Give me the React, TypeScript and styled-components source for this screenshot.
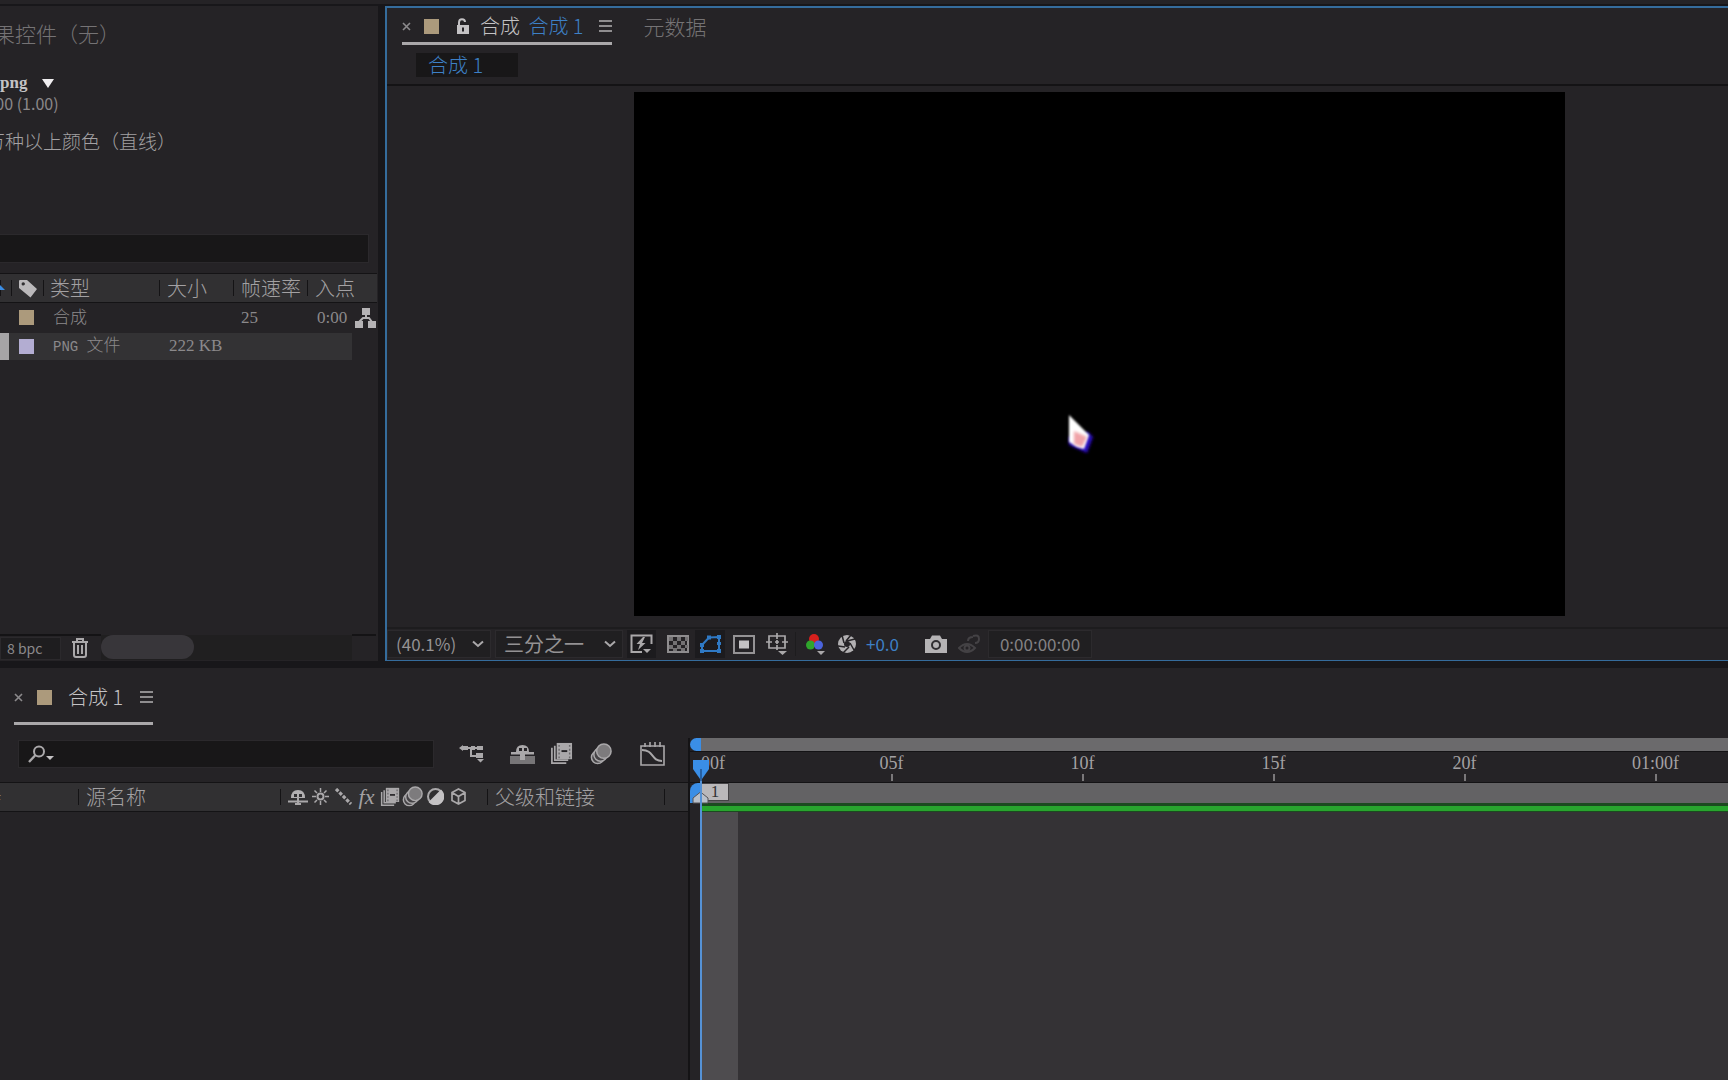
import React from "react";
import styled, { createGlobalStyle, css } from "styled-components";

const c = {
  panel: "#252326",
  gutter: "#18171a",
  bar: "#313032",
  field: "#181718",
  line: "#141315",
  text: "#a3a1a3",
  dim: "#757375",
  bright: "#c4c2c4",
  blue: "#3d80c6",
  marker: "#3a8ee6",
};

const Global = createGlobalStyle`
  * { box-sizing: border-box; }
  body { margin: 0; background: ${c.gutter}; }
  button, input, select { font: inherit; color: inherit; margin: 0; padding: 0; border: 0; background: none; border-radius: 0; }
  svg { display: block; flex: none; }
`;

const Shell = styled.div`
  display: flex;
  flex-direction: column;
  min-height: 100vh;
  overflow: hidden;
  color: ${c.text};
  font: 300 20px/24px "Noto Sans CJK SC", "Noto Sans", sans-serif;
`;
const TopStrip = styled.div`
  height: 4px;
  margin-bottom: 2px;
  background: ${c.panel};
`;
const Upper = styled.div`
  display: flex;
  gap: 7px;
  margin-bottom: 7px;
`;

/* ---------- project panel ---------- */
const Project = styled.section`
  display: flex;
  flex-direction: column;
  flex: none;
  width: 378px;
  overflow: hidden;
  background: ${c.panel};
`;
const EffectsTab = styled.button`
  align-self: flex-start;
  margin: 15px 0 0 -27px;
  font-size: 21px;
  line-height: 24px;
  color: ${c.dim};
  white-space: nowrap;
`;
const FileInfo = styled.div`
  margin-top: 28px;
  white-space: nowrap;
`;
const FileName = styled.button`
  display: flex;
  align-items: center;
  gap: 15px;
  font: bold 17px/20px "Liberation Serif", serif;
  color: ${c.bright};
`;
const PixelAspect = styled.p`
  margin: 0 0 0 -18px;
  font-size: 16px;
  font-weight: 400;
  line-height: 20px;
  color: #8b888a;
`;
const ColorDepth = styled.p`
  margin: 18px 0 0 -52px;
  font-size: 19px;
  line-height: 20px;
`;
const ProjectSearch = styled.input`
  width: 369px;
  height: 29px;
  margin-top: 83px;
  background: ${c.field};
  border: 1px solid #2b292c;
  border-left: 0;
`;
const Items = styled.table`
  width: 377px;
  margin-top: 10px;
  table-layout: fixed;
  border-collapse: collapse;
  text-align: left;
`;
const Th = styled.th<{ $pad?: number }>`
  height: 29px;
  padding: 0 0 0 ${(p) => p.$pad ?? 0}px;
  border: solid ${c.line};
  border-width: 1px 0;
  background: linear-gradient(${c.line}, ${c.line}) 0 center / 1px 16px no-repeat ${c.bar};
  font-weight: 300;
  line-height: 24px;
  white-space: nowrap;
`;
const Row = styled.tr<{ $selected?: boolean }>`
  height: ${(p) => (p.$selected ? 27 : 30)}px;
  font-size: 17px;
  line-height: 20px;
  color: #8b898b;
  td:not(:last-child) { background: ${(p) => (p.$selected ? "#333234" : "transparent")}; }
`;
const Td = styled.td<{ $pad?: number }>`
  padding: 0 0 0 ${(p) => p.$pad ?? 0}px;
  font-family: "Liberation Serif", "Noto Sans CJK SC", serif;
  white-space: nowrap;
`;
const Latin = styled.span`
  margin-right: 4px;
  font: 14px/20px "Liberation Mono", monospace;
`;
const Thumb = styled.div`
  width: 9px;
  height: 27px;
  background: #a6a4a6;
`;
const Swatch = styled.span<{ $color?: string }>`
  display: block;
  flex: none;
  width: 15px;
  height: 15px;
  background: ${(p) => p.$color ?? "#ac9a7c"};
`;
const ProjectFooter = styled.div`
  display: flex;
  align-items: center;
  height: 27px;
  margin-top: auto;
  padding-right: 2px;
`;
const FooterGroup = styled.div<{ $width: number }>`
  display: flex;
  align-items: center;
  width: ${(p) => p.$width}px;
  height: 27px;
  border-top: 2px solid ${c.line};
`;
const Depth = styled.button`
  width: 61px;
  height: 23px;
  margin-right: 10px;
  padding-left: 6px;
  background: #1e1d1f;
  border: 1px solid #2b292c;
  font-size: 14px;
  font-weight: 400;
  line-height: 20px;
  text-align: left;
  color: #8b898b;
`;
const ScrollTrack = styled.div`
  flex: 1;
  height: 25px;
  background: #201f20;
`;
const ScrollThumb = styled.div`
  width: 93px;
  height: 24px;
  border-radius: 12px;
  background: #38363a;
`;

/* ---------- composition panel ---------- */
const Composition = styled.section`
  flex: 1;
  min-width: 0;
  background: ${c.panel};
  border: solid #356c9c;
  border-width: 2px 0 1px 2px;
`;
const TabBar = styled.div`
  display: flex;
  gap: 32px;
  padding-left: 15px;
`;
const Tab = styled.div<{ $tall?: boolean }>`
  display: flex;
  align-items: center;
  height: ${(p) => (p.$tall ? 57 : 37)}px;
  padding-top: ${(p) => (p.$tall ? 5 : 2)}px;
  border-bottom: 3px solid #aaa8aa;
`;
const TabTitle = styled.button<{ $blue?: boolean }>`
  margin-left: ${(p) => (p.$blue ? 4 : 0)}px;
  font-size: 20px;
  line-height: 24px;
  white-space: pre;
  color: ${(p) => (p.$blue ? c.blue : c.bright)};
`;
const PlainTab = styled.button`
  height: 34px;
  padding-top: 2px;
  font-size: 21px;
  line-height: 24px;
  color: ${c.dim};
`;
const IconButton = styled.button<{ $width: number; $before?: number; $gap?: number; $dark?: boolean }>`
  display: flex;
  align-items: center;
  justify-content: center;
  flex: none;
  width: ${(p) => p.$width}px;
  height: 28px;
  margin-left: ${(p) => p.$before ?? 0}px;
  margin-right: ${(p) => p.$gap ?? 0}px;
  background: ${(p) => (p.$dark ? "#1c1b1e" : "transparent")};
`;
const SubTabBar = styled.div`
  height: 41px;
  padding: 8px 0 0 29px;
  border-bottom: 2px solid ${c.line};
`;
const SubTab = styled.button`
  width: 102px;
  height: 24px;
  padding-left: 12px;
  background: ${c.field};
  line-height: 22px;
  text-align: left;
  color: ${c.blue};
`;
const Stage = styled.div`
  padding: 6px 163px 11px 247px;
`;
const Canvas = styled.div`
  position: relative;
  aspect-ratio: 16 / 9;
  background: #000;
`;
const Pointer = styled.svg`
  position: absolute;
  left: 46%;
  top: 61%;
`;
const ViewBar = styled.div`
  display: flex;
  align-items: center;
  height: 33px;
  border-top: 2px solid #1d1c1e;
`;
const boxed = css`
  height: 28px;
  background: #201f21;
  border: 1px solid #2c2a2d;
`;
const SelectBox = styled.label<{ $width: number }>`
  ${boxed}
  display: grid;
  align-items: center;
  flex: none;
  width: ${(p) => p.$width}px;
  margin-right: 4px;
  > * { grid-area: 1 / 1; }
  svg { justify-self: end; margin-right: 5px; pointer-events: none; }
`;
const Select = styled.select<{ $size: number }>`
  width: 100%;
  padding-left: 8px;
  appearance: none;
  outline: 0;
  font-size: ${(p) => p.$size}px;
  font-weight: 400;
  line-height: 24px;
  color: #949294;
`;
const Exposure = styled.button`
  width: 58px;
  font-size: 17px;
  font-weight: 400;
  line-height: 24px;
  text-align: left;
  color: ${c.blue};
`;
const Rule = styled.span<{ $gap: number }>`
  width: 1px;
  height: 24px;
  margin-right: ${(p) => p.$gap}px;
  background: #1d1c1e;
`;
const Time = styled.button`
  ${boxed}
  width: 104px;
  font-size: 17px;
  font-weight: 400;
  line-height: 24px;
  color: #858385;
`;

/* ---------- timeline panel ---------- */
const Timeline = styled.section`
  display: flex;
  flex-direction: column;
  flex: 1;
  background: ${c.panel};
`;
const TimelineTabs = styled.div`
  display: flex;
  height: 70px;
  padding-left: 14px;
`;
const Split = styled.div`
  display: flex;
  flex: 1;
`;
const Layers = styled.div`
  flex: none;
  width: 690px;
  border-right: 2px solid ${c.line};
`;
const Tools = styled.div`
  display: flex;
  align-items: center;
  height: 44px;
  padding: 0 0 12px 18px;
`;
const Search = styled.label`
  display: flex;
  align-items: center;
  width: 416px;
  height: 28px;
  margin-right: 25px;
  padding-left: 9px;
  background: ${c.field};
  border: 1px solid #2b292c;
`;
const SearchInput = styled.input`
  flex: 1;
  min-width: 0;
  height: 24px;
  outline: 0;
`;
const LayerHead = styled.div`
  display: flex;
  height: 30px;
  background: ${c.bar};
  border: solid ${c.line};
  border-width: 1px 0;
`;
const HeadCell = styled.div<{ $width: number; $pad?: number }>`
  display: flex;
  align-items: center;
  width: ${(p) => p.$width}px;
  padding-left: ${(p) => p.$pad ?? 0}px;
  overflow: hidden;
  white-space: nowrap;
  background: linear-gradient(${c.line}, ${c.line}) right center / 1px 16px no-repeat;
`;
const Hash = styled.span`
  margin-left: -8px;
  font-size: 17px;
`;
const Switch = styled.span`
  display: flex;
  justify-content: center;
  flex: none;
  width: 23px;
`;
const Tracks = styled.div`
  position: relative;
  display: flex;
  flex-direction: column;
  flex: 1;
  min-width: 0;
  overflow: hidden;
`;
const Navigator = styled.div`
  height: 13px;
  border-left: 11px solid ${c.marker};
  border-radius: 7px 0 0 7px;
  background: #6b6a6c;
`;
const Ruler = styled.div`
  display: flex;
  height: 32px;
  padding-left: 11px;
  border-top: 1px solid ${c.line};
  border-bottom: 1px solid ${c.line};
  font: 18px/22px "Liberation Serif", serif;
`;
const Mark = styled.div<{ $first?: boolean }>`
  flex: none;
  display: flex;
  flex-direction: column;
  align-items: ${(p) => (p.$first ? "flex-start" : "center")};
  width: ${(p) => (p.$first ? 95 : 191)}px;
  &::after {
    content: "";
    display: ${(p) => (p.$first ? "none" : "block")};
    width: 2px;
    height: 7px;
    background: #7a787a;
  }
`;
const WorkArea = styled.div`
  height: 20px;
  border-left: 11px solid ${c.marker};
  border-radius: 8px 0 0 0;
  background: #636264;
`;
const CompMarker = styled.button`
  display: block;
  width: 28px;
  height: 18px;
  background: #bab8ba;
  border: 1px solid #454346;
  font: 17px/16px "Liberation Serif", serif;
  color: #333;
`;
const CacheBar = styled.div`
  height: 9px;
  margin-left: 11px;
  border: solid #1c4a20;
  border-width: 3px 0 1px;
  background: #28a52e;
`;
const TrackBody = styled.div`
  flex: 1;
  margin-left: 11px;
  background: #343235;
`;
const FirstFrame = styled.div`
  width: 37px;
  height: 100%;
  background: #4e4c4f;
`;
const Playhead = styled.div`
  position: absolute;
  top: 21px;
  bottom: 0;
  left: 2px;
  width: 18px;
  background: linear-gradient(#5592d6, #5592d6) 8px 20px / 2px 100% no-repeat;
`;
const WorkHandle = styled.svg`
  position: absolute;
  left: 2px;
  top: 53px;
`;

/* ---------- icons ---------- */
const G = "#aaa8aa";
type IconProps = { w: number; h: number; box: string; children: React.ReactNode };
const Icon = ({ w, h, box, children }: IconProps) => (
  <svg width={w} height={h} viewBox={box} fill="none" stroke={G} strokeWidth="2" aria-hidden="true">{children}</svg>
);
const Close = () => (
  <Icon w={9} h={9} box="0 0 9 9"><path d="M1 1l7 7M8 1L1 8" stroke="#8c8a8c" strokeWidth="1.6" /></Icon>
);
const Menu = () => (
  <Icon w={13} h={12} box="0 0 13 12"><path d="M0 1h13M0 6h13M0 11h13" stroke="#8f8d8f" strokeWidth="1.8" /></Icon>
);
const Chevron = () => (
  <Icon w={14} h={8} box="0 0 14 8"><path d="M2 1.500L7 6l5-4.500" /></Icon>
);
const Unlock = () => (
  <Icon w={14} h={17} box="0 0 14 17">
    <path d="M3 8V4.500C3 2 4.500 1.200 6 1.200S9 2 9 4" stroke={c.bright} />
    <path d="M1 7h12v9H1z" fill={c.bright} stroke="none" /><path d="M7 9.500v4" stroke="#252326" />
  </Icon>
);
const Tag = () => (
  <Icon w={20} h={19} box="0 0 20 19">
    <path fillRule="evenodd" d="M1 2q0-1 1-1h7l10 9-6.500 8.500L1 9zM5.200 3.200a1.700 1.700 0 1 0 .1 3.400 1.700 1.700 0 0 0-.1-3.400z" fill="#bbb9bb" stroke="none" />
  </Icon>
);
const Flow = () => (
  <Icon w={21} h={20} box="0 0 21 20">
    <path d="M7 0h8v7H7zM0 13h8v7H0zM13 13h8v7h-8z" fill="#b5b3b5" stroke="none" /><path d="M11 6v4M4 14l4-4h6l3 4" stroke="#b5b3b5" />
  </Icon>
);
const Trash = () => (
  <Icon w={18} h={20} box="0 0 18 20">
    <path d="M1 4h16M6 3V1h6v2" /><path d="M3 5v12q0 2 2 2h8q2 0 2-2V5M7 7v9M11 7v9" />
  </Icon>
);
const FastPreview = () => (
  <Icon w={23} h={21} box="0 0 23 21">
    <path d="M12 18H1.500V1.500h20V10" /><path d="M13 3L6.500 10H10l-2 6 7.500-7H12l3-6z" fill={G} stroke="none" /><path d="M13 15h8l-4 4z" fill={G} stroke="none" />
  </Icon>
);
const Checker = () => (
  <Icon w={22} h={18} box="0 0 22 18">
    <path d="M1 1h20v16H1z" stroke="#8f8d8f" />
    <path d="M2 2h4v4H2zM10 2h4v4h-4zM6 6h4v4H6zM14 6h4v4h-4zM2 10h4v4H2zM10 10h4v4h-4zM6 13h4v3H6zM14 13h4v3h-4zM18 2h3v4h-3zM18 10h3v3h-3z" fill="#747274" stroke="none" />
  </Icon>
);
const MaskShape = () => (
  <Icon w={23} h={21} box="0 0 23 21">
    <path d="M3 17L3 11 10 3.500 20 3V17z" stroke="#2f79c4" />
    <path d="M1 15h4v4H1zM1 9h4v4H1zM8 1.500h4v4H8zM18 1h4v4h-4zM18 15h4v4h-4zM18 8h4v3h-4z" fill="#2f79c4" stroke="none" />
  </Icon>
);
const Region = () => (
  <Icon w={22} h={19} box="0 0 22 19"><path d="M1 1h20v17H1z" stroke="#959395" /><path d="M6 5.500h10v8H6z" fill={c.bright} stroke="none" /></Icon>
);
const Guides = () => (
  <Icon w={22} h={23} box="0 0 22 23">
    <path d="M3 3h16v12H3zM11 0v6M11 12v5M0 9h6M16 9h6M9 9h4M11 7v4" strokeWidth="1.700" /><path d="M12 18h9l-4.500 4z" fill={G} stroke="none" />
  </Icon>
);
const Channels = () => (
  <Icon w={20} h={23} box="0 0 20 23">
    <g stroke="none"><circle cx="8" cy="6" r="5" fill="#d6201d" /><circle cx="4.500" cy="12" r="4.500" fill="#2fa52c" /><circle cx="12.500" cy="12" r="4.500" fill="#4b63dc" /><path d="M11 18h8l-4 4z" fill={G} /></g>
  </Icon>
);
const Aperture = () => (
  <Icon w={20} h={20} box="0 0 20 20">
    <circle cx="10" cy="10" r="9" fill="#b2b0b2" stroke="none" />
    <circle cx="10" cy="10" r="3" fill={c.panel} stroke="none" />
    <path d="M10 7L18 5M13 9l4 7M12 13l-6 6M8 13L1 12M7 9L5 1M9 7l5-6" stroke={c.panel} strokeWidth="1.500" />
  </Icon>
);
const Camera = () => (
  <Icon w={22} h={18} box="0 0 22 18">
    <path d="M0 4h5l2-3.500h8L17 4h5v14H0z" fill="#b5b3b5" stroke="none" /><circle cx="11" cy="10" r="4" stroke="#302e31" />
  </Icon>
);
const ShowSnapshot = () => (
  <Icon w={23} h={20} box="0 0 23 20">
    <path d="M1 14q8-8 16 0-8 8-16 0zM10 7q0-4 5-4M15 2q6-2 6 3 0 4-4 4" stroke="#444245" /><circle cx="9" cy="14" r="2.500" stroke="#444245" />
  </Icon>
);
const Lens = () => (
  <Icon w={27} h={18} box="0 0 27 18"><circle cx="11" cy="6.500" r="5" /><path d="M7.500 10L1 17" strokeWidth="2.400" /><path d="M18 11h8l-4 4z" fill={c.bright} stroke="none" /></Icon>
);
const FlowChart = () => (
  <Icon w={26} h={19} box="0 0 26 19">
    <path d="M5 4h13M12 4v8h6" /><path d="M0 4l4-3v6zM4 2h5v4H4zM12 2h4v4h-4zM18 2h6v4h-6zM17 9h7v5h-7zM18 15h7l-3.500 3.500z" fill={G} stroke="none" />
  </Icon>
);
const ShyHead = () => (
  <Icon w={20} h={16} box="0 0 20 16">
    <path d="M3 9q0-8 7-8t7 8z" fill="#b2b0b2" stroke="none" />
    <path d="M6 5h3v3H6zM11 5h3v3h-3z" fill={c.bar} stroke="none" /><path d="M0 12.500h20M7 15h6M10 8v6" />
  </Icon>
);
const ShyAll = () => (
  <Icon w={25} h={20} box="0 0 25 20">
    <path d="M0 12h25v8H0z" fill="#777577" stroke="none" /><path d="M6 8q0-7 6.500-7T19 8zM1 8h23v2.500H1zM10 10h5v6h-5z" fill={G} stroke="none" />
    <path d="M9 4h3v3H9zM14 4h3v3h-3z" fill={c.panel} stroke="none" />
  </Icon>
);
const Frames = ({ size = 23 }: { size?: number }) => (
  <Icon w={size} h={size} box="0 0 24 24">
    <path d="M2 6v16h15M5 4v15h14" strokeWidth="1.800" /><path d="M7 1h16v17H7z" fill={G} stroke="none" />
    <path d="M9.500 3v14M20.500 3v14" stroke="#6a686b" strokeWidth="1.500" strokeDasharray="2 2" /><path d="M12 9.500h6" stroke={c.panel} />
  </Icon>
);
const Blur = ({ size = 22 }: { size?: number }) => (
  <Icon w={size} h={size} box="0 0 23 23">
    <circle cx="8" cy="15" r="6.500" strokeWidth="1.600" fill="#454346" /><circle cx="11" cy="12" r="7" strokeWidth="1.600" fill="#454346" /><circle cx="14.500" cy="8.500" r="7.500" fill="#7d7b7d" strokeWidth="1.600" />
  </Icon>
);
const Graph = () => (
  <Icon w={25} h={24} box="0 0 25 24"><path d="M1 4h23v19H1zM5 1v4M10 0v5M15 0v5M20 0v5" strokeWidth="1.600" /><path d="M2 8c12 0 9 11 20 11" /></Icon>
);
const Sun = () => (
  <Icon w={17} h={17} box="0 0 17 17"><circle cx="8.500" cy="8.500" r="3" /><path d="M8.500 0v4M8.500 13v4M0 8.500h4M13 8.500h4M2.500 2.500L5 5M12 12l2.500 2.500M14.500 2.500L12 5M5 12l-2.500 2.500" strokeWidth="1.500" /></Icon>
);
const Quality = () => (
  <Icon w={17} h={17} box="0 0 17 17"><path d="M1 1l15 15" strokeWidth="3.200" strokeDasharray="3.400 1.500" /></Icon>
);
const Fx = styled.span`
  font: italic 22px/24px "Liberation Serif", serif;
`;
const Adjustment = () => (
  <Icon w={17} h={17} box="0 0 17 17"><circle cx="8.500" cy="8.500" r="7.500" /><path d="M14 3A7.700 7.700 0 0 1 3 14z" fill={c.bright} stroke={c.bright} /></Icon>
);
const Cube = () => (
  <Icon w={17} h={17} box="0 0 17 17"><path d="M8.500 1l6.500 3.500v8L8.500 16 2 12.500v-8zM2 4.500l6.500 4 6.500-4M8.500 8.500V16" strokeWidth="1.700" /></Icon>
);

export default function App() {
  const switches = [
    <ShyHead />, <Sun />, <Quality />, <Fx>fx</Fx>, <Frames size={20} />, <Blur size={21} />, <Adjustment />, <Cube />,
  ];
  return (
    <Shell>
      <Global />
      <TopStrip />
      <Upper>
        <Project>
          <EffectsTab>效果控件（无）</EffectsTab>
          <FileInfo>
            <FileName>
              png
              <svg width="12" height="9" viewBox="0 0 12 9"><path d="M0 0h12L6 9z" fill="#f0eef0" /></svg>
            </FileName>
            <PixelAspect>1.00 (1.00)</PixelAspect>
            <ColorDepth>数百万种以上颜色（直线）</ColorDepth>
          </FileInfo>
          <ProjectSearch aria-label="搜索项目" />
          <Items>
            <colgroup>
              <col width="11" /><col width="32" /><col width="116" /><col width="74" />
              <col width="74" /><col width="45" /><col width="25" />
            </colgroup>
            <thead>
              <tr>
                <Th aria-label="排序"><svg width="6" height="6" viewBox="0 0 6 6"><path d="M0 0l5 5H0z" fill={c.marker} /></svg></Th>
                <Th $pad={7} aria-label="标签"><Tag /></Th>
                <Th $pad={7}>类型</Th>
                <Th $pad={8}>大小</Th>
                <Th $pad={8}>帧速率</Th>
                <Th $pad={8} colSpan={2}>入点</Th>
              </tr>
            </thead>
            <tbody>
              <Row>
                <Td /><Td $pad={8}><Swatch /></Td><Td $pad={10}>合成</Td><Td /><Td $pad={8}>25</Td><Td $pad={10}>0:00</Td><Td $pad={3}><Flow /></Td>
              </Row>
              <Row $selected>
                <Td><Thumb /></Td><Td $pad={8}><Swatch $color="#b3add2" /></Td><Td $pad={10}><Latin>PNG</Latin> 文件</Td><Td $pad={10}>222 KB</Td><Td /><Td /><Td />
              </Row>
            </tbody>
          </Items>
          <ProjectFooter>
            <FooterGroup $width={101}>
              <Depth>8 bpc</Depth>
              <IconButton $width={18} aria-label="删除"><Trash /></IconButton>
            </FooterGroup>
            <ScrollTrack><ScrollThumb /></ScrollTrack>
            <FooterGroup $width={24} />
          </ProjectFooter>
        </Project>

        <Composition>
          <TabBar>
            <Tab>
              <IconButton $width={9} $gap={13} aria-label="关闭"><Close /></IconButton>
              <Swatch />
              <IconButton $before={17} $width={14} $gap={10} aria-label="锁定"><Unlock /></IconButton>
              <TabTitle>合成 </TabTitle>
              <TabTitle $blue>合成 1</TabTitle>
              <IconButton $before={15} $width={13} aria-label="面板菜单"><Menu /></IconButton>
            </Tab>
            <PlainTab>元数据</PlainTab>
          </TabBar>
          <SubTabBar><SubTab>合成 1</SubTab></SubTabBar>
          <Stage>
            <Canvas>
              <Pointer width="38" height="48" viewBox="0 0 38 48" aria-hidden="true">
                <defs>
                  <filter id="soft" x="-30%" y="-30%" width="160%" height="160%"><feGaussianBlur stdDeviation="1.400" /></filter>
                  <filter id="edge" x="-30%" y="-30%" width="160%" height="160%"><feGaussianBlur stdDeviation="0.800" /></filter>
                </defs>
                <path d="M7 26l19-5 5 5-6 16-18-8z" fill="#2c0fc0" filter="url(#soft)" />
                <path d="M7 4l20 20-5 14-7-2-8-5z" fill="#fff" filter="url(#edge)" />
                <path d="M12 20l13 6-5 10-8-3z" fill="#f0a3a8" filter="url(#soft)" />
              </Pointer>
            </Canvas>
          </Stage>
          <ViewBar>
            <SelectBox $width={104}>
              <Select $size={17} aria-label="放大率"><option>(40.1%)</option></Select><Chevron />
            </SelectBox>
            <SelectBox $width={128}>
              <Select $size={20} aria-label="分辨率"><option>三分之一</option></Select><Chevron />
            </SelectBox>
            <IconButton $width={29} $gap={5} $dark aria-label="快速预览"><FastPreview /></IconButton>
            <IconButton $width={33} $gap={1} aria-label="透明网格"><Checker /></IconButton>
            <IconButton $width={30} $gap={4} $dark aria-label="蒙版"><MaskShape /></IconButton>
            <IconButton $width={30} $gap={3} aria-label="目标区域"><Region /></IconButton>
            <IconButton $width={30} $gap={3} aria-label="参考线"><Guides /></IconButton>
            <Rule $gap={6} />
            <IconButton $width={27} $gap={5} aria-label="通道"><Channels /></IconButton>
            <IconButton $width={26} $gap={6} aria-label="重置曝光"><Aperture /></IconButton>
            <Exposure>+0.0</Exposure>
            <IconButton $width={24} $gap={8} aria-label="拍摄快照"><Camera /></IconButton>
            <IconButton $width={26} $gap={6} aria-label="显示快照"><ShowSnapshot /></IconButton>
            <Time>0:00:00:00</Time>
          </ViewBar>
        </Composition>
      </Upper>

      <Timeline>
        <TimelineTabs>
          <Tab $tall>
            <IconButton $width={9} $gap={14} aria-label="关闭"><Close /></IconButton>
            <Swatch />
            <IconButton as="i" $width={16} aria-hidden="true" />
            <TabTitle>合成 1</TabTitle>
            <IconButton $before={17} $width={13} aria-label="面板菜单"><Menu /></IconButton>
          </Tab>
        </TimelineTabs>
        <Split>
          <Layers>
            <Tools>
              <Search><Lens /><SearchInput aria-label="搜索图层" /></Search>
              <IconButton $width={26} $gap={24} aria-label="合成微型流程图"><FlowChart /></IconButton>
              <IconButton $width={26} $gap={13} aria-label="隐藏消隐图层"><ShyAll /></IconButton>
              <IconButton $width={26} $gap={14} aria-label="帧混合"><Frames /></IconButton>
              <IconButton $width={26} $gap={25} aria-label="运动模糊"><Blur /></IconButton>
              <IconButton $width={26} aria-label="图表编辑器"><Graph /></IconButton>
            </Tools>
            <LayerHead>
              <HeadCell $width={79}><Hash>#</Hash></HeadCell>
              <HeadCell $width={202} $pad={7}>源名称</HeadCell>
              <HeadCell $width={207} $pad={5}>
                {switches.map((icon, i) => <Switch key={i}>{icon}</Switch>)}
              </HeadCell>
              <HeadCell $width={177} $pad={7}>父级和链接</HeadCell>
            </LayerHead>
          </Layers>
          <Tracks>
            <Navigator />
            <Ruler>
              <Mark $first>00f</Mark>
              <Mark>05f</Mark>
              <Mark>10f</Mark>
              <Mark>15f</Mark>
              <Mark>20f</Mark>
              <Mark>01:00f</Mark>
            </Ruler>
            <WorkArea><CompMarker>1</CompMarker></WorkArea>
            <CacheBar />
            <TrackBody><FirstFrame /></TrackBody>
            <WorkHandle width="17" height="13" viewBox="0 0 17 13"><path d="M1 12V7l7.500-6L16 7v5z" fill="#b9c0ca" stroke="#555356" /></WorkHandle>
            <Playhead>
              <svg width="18" height="22" viewBox="0 0 18 22"><path d="M1 1h16v9l-7 10H8L1 10z" fill={c.marker} /><path d="M9 10v12" stroke="#20508c" strokeWidth="1.500" /></svg>
            </Playhead>
          </Tracks>
        </Split>
      </Timeline>
    </Shell>
  );
}
